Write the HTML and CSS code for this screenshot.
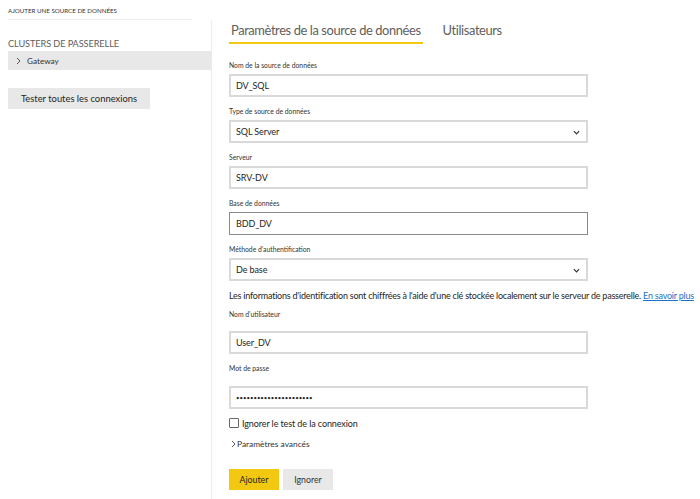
FILE: index.html
```html
<!DOCTYPE html>
<html lang="fr">
<head>
<meta charset="utf-8">
<title>Ajouter une source de données</title>
<link rel="stylesheet" href="styles.css">
</head>
<body>
<div class="page">
  <aside class="sidebar">
    <div class="crumb"><span>AJOUTER UNE SOURCE DE DONNÉES</span></div>
    <div class="side-body">
      <div class="side-title">CLUSTERS DE PASSERELLE</div>
      <div class="cluster-row"><svg class="chev" viewBox="0 0 5 8" width="5" height="8"><path d="M1 1 L4 4 L1 7" fill="none" stroke="#444" stroke-width="0.9"/></svg><span>Gateway</span></div>
      <button class="btn-test">Tester toutes les connexions</button>
    </div>
  </aside>
  <main class="main">
    <nav class="tabs">
      <span class="tab active">Paramètres de la source de données</span>
      <span class="tab">Utilisateurs</span>
    </nav>
    <div class="field first">
      <label class="lbl">Nom de la source de données</label>
      <div class="input">DV_SQL</div>
    </div>
    <div class="field">
      <label class="lbl">Type de source de données</label>
      <div class="input select">SQL Server<svg class="caret" viewBox="0 0 8 5" width="7" height="5"><path d="M1 1 L4 4 L7 1" fill="none" stroke="#333" stroke-width="1.4"/></svg></div>
    </div>
    <div class="field">
      <label class="lbl">Serveur</label>
      <div class="input">SRV-DV</div>
    </div>
    <div class="field">
      <label class="lbl">Base de données</label>
      <div class="input focus">BDD_DV</div>
    </div>
    <div class="field">
      <label class="lbl">Méthode d'authentification</label>
      <div class="input select">De base<svg class="caret" viewBox="0 0 8 5" width="7" height="5"><path d="M1 1 L4 4 L7 1" fill="none" stroke="#333" stroke-width="1.4"/></svg></div>
    </div>
    <p class="info">Les informations d'identification sont chiffrées à l'aide d'une clé stockée localement sur le serveur de passerelle. <a href="#">En savoir plus</a></p>
    <div class="cred user">
      <label class="lbl">Nom d'utilisateur</label>
      <div class="input">User_DV</div>
    </div>
    <div class="cred pass">
      <label class="lbl">Mot de passe</label>
      <div class="input pwd">••••••••••••••••••••••</div>
    </div>
    <div class="check"><span class="box"></span><span>Ignorer le test de la connexion</span></div>
    <div class="adv"><svg class="adv-chev" viewBox="0 0 5 8" width="5" height="8"><path d="M1 1 L4 4 L1 7" fill="none" stroke="#444" stroke-width="0.9"/></svg>Paramètres avancés</div>
    <div class="actions">
      <button class="btn primary">Ajouter</button>
      <button class="btn">Ignorer</button>
    </div>
  </main>
</div>
</body>
</html>
```
FILE: styles.css
```css
html, body {
  margin: 0;
  padding: 0;
  background: #fff;
}
body {
  font-family: "Lato", "Open Sans", sans-serif;
  color: #252423;
  width: 700px;
  height: 499px;
  overflow: hidden;
}
.page {
  display: flex;
  height: 499px;
}
.sidebar {
  width: 212px;
  flex: none;
  display: flex;
  flex-direction: column;
}
.crumb {
  padding-left: 8px;
}
.crumb span {
  display: block;
  width: 184px;
  height: 20px;
  box-sizing: border-box;
  padding-top: 7px;
  font-size: 6.2px;
  line-height: 8px;
  color: #333;
  border-bottom: 1px solid #ececec;
}
.side-body {
  flex: 1;
  border-right: 1px solid #ececec;
  padding-top: 18px;
}
.side-title {
  padding-left: 8px;
  font-size: 9.2px;
  line-height: 12px;
  color: #605e5c;
  letter-spacing: -0.1px;
}
.cluster-row {
  margin-left: 8px;
  margin-top: 1px;
  height: 19px;
  background: #e8e8e8;
  display: flex;
  align-items: center;
  font-size: 8.2px;
  color: #333;
}
.chev {
  margin-left: 8px;
  margin-right: 6px;
}
.btn-test {
  display: block;
  margin: 18px 0 0 8px;
  width: 142px;
  height: 21px;
  border: none;
  background: #e8e8e8;
  font-family: inherit;
  font-size: 9.4px;
  color: #252423;
  padding: 0;
}
.main {
  flex: 1;
  padding-left: 17px;
}
.tabs {
  display: flex;
  gap: 18px;
  padding-top: 21px;
  height: 23px;
}
.tab {
  font-size: 12.9px;
  line-height: 19px;
  color: #605e5c;
  letter-spacing: -0.4px;
  padding: 0 2px;
  height: 21px;
}
.tab.active {
  border-bottom: 2px solid #f2c811;
}
.field {
  margin-top: 8px;
}
.field.first {
  margin-top: 15px;
}
.lbl {
  display: block;
  font-size: 6.8px;
  line-height: 12px;
  color: #333;
}
.input {
  margin-top: 3px;
  width: 359px;
  height: 23px;
  box-sizing: border-box;
  border: 2px solid #d9d9d9;
  padding-left: 5px;
  display: flex;
  align-items: center;
  font-size: 9px;
  letter-spacing: -0.1px;
  color: #252423;
}
.input.focus {
  border: 1px solid #8a8a8a;
  padding-left: 6px;
}
.select {
  position: relative;
}
.caret {
  position: absolute;
  right: 6px;
  top: 8px;
}
.pwd {
  font-size: 6px;
  letter-spacing: 0;
}
.info {
  margin: 8px 0 0;
  font-size: 9px;
  line-height: 14px;
  letter-spacing: -0.22px;
  white-space: nowrap;
  color: #252423;
}
.info a {
  color: #1b73c8;
  text-decoration: underline;
}
.cred.user {
  margin-top: 5px;
}
.cred.user .input {
  margin-top: 11px;
}
.cred.pass {
  margin-top: 8px;
}
.cred.pass .input {
  margin-top: 12px;
}
.check {
  margin-top: 7px;
  display: flex;
  align-items: center;
  height: 14px;
  font-size: 9px;
  letter-spacing: -0.1px;
  color: #252423;
}
.box {
  width: 8px;
  height: 8px;
  border: 1px solid #666;
  border-radius: 1px;
  margin-right: 3px;
}
.adv {
  margin-top: 7px;
  height: 14px;
  display: flex;
  align-items: center;
  font-size: 8.4px;
  color: #333;
}
.adv-chev {
  margin-left: 2px;
  margin-right: 1px;
}
.actions {
  margin-top: 18px;
  display: flex;
  gap: 4px;
}
.btn {
  width: 50px;
  height: 21px;
  border: none;
  padding: 0;
  background: #e8e8e8;
  font-family: inherit;
  font-size: 8.8px;
  color: #333;
}
.btn.primary {
  background: #f2c811;
  color: #252423;
}
```
